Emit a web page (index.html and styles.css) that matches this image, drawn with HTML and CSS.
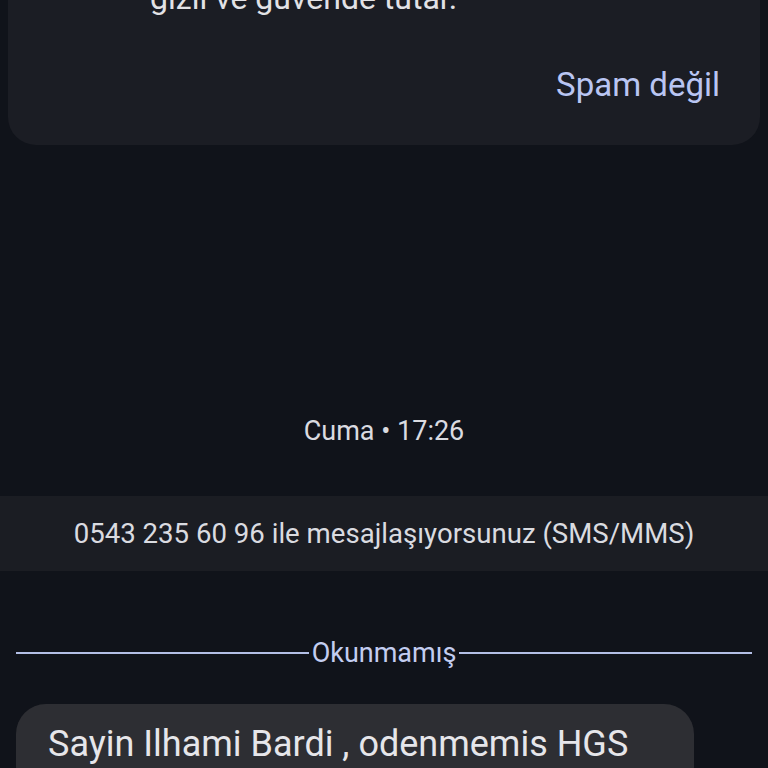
FILE: index.html
```html
<!DOCTYPE html>
<html>
<head>
	<meta charset="utf-8">
	<title>Mesajlar</title>
	<link rel="stylesheet" href="styles.css">
</head>
<body>
	<div class="spam_card">
		<p class="spam_text">gizli ve güvende tutar.</p>
		<div class="spam_actions">
			<span class="spam_btn">Spam değil</span>
		</div>
	</div>

	<div class="date_stamp">Cuma • 17:26</div>

	<div class="sms_banner">0543 235 60 96 ile mesajlaşıyorsunuz (SMS/MMS)</div>

	<div class="unread_divider">
		<span class="line"></span>
		<span class="label">Okunmamış</span>
		<span class="line"></span>
	</div>

	<div class="bubble">Sayin Ilhami Bardi , odenmemis HGS</div>
</body>
</html>
```

FILE: styles.css
```css
html,body{margin:0;padding:0;}
body{
	background:#10131a;
	color:#e2e2e6;
	font-family:Roboto,"Noto Sans",sans-serif;
	width:768px;
	height:768px;
	overflow:hidden;
}
p{margin:0;}

.spam_card{
	margin:-20px 8px 0;
	background:#1b1d24;
	border-radius:0 0 28px 28px;
	padding:0 40px 42px 142px;
}
.spam_text{font-size:32px;line-height:36px;}
.spam_actions{display:flex;justify-content:flex-end;margin-top:51px;}
.spam_btn{color:#b9c5f2;font-size:33px;line-height:36px;}

.date_stamp{
	margin-top:270px;
	text-align:center;
	font-size:27px;
	line-height:32px;
	color:#dadbe0;
}

.sms_banner{
	margin-top:49px;
	height:75px;
	background:#1b1d23;
	display:flex;
	align-items:center;
	justify-content:center;
	font-size:27.6px;
	color:#dadbe0;
}

.unread_divider{
	display:flex;
	align-items:center;
	gap:3px;
	margin:68px 16px 0;
	height:28px;
}
.unread_divider .line{flex:1;height:2px;background:#b3bfe6;}
.unread_divider .label{color:#c3cdf0;font-size:27px;}

.bubble{
	margin:37px 0 0 16px;
	width:614px;
	background:#2d2e33;
	border-radius:30px;
	padding:18px 32px 30px;
	font-size:36px;
	line-height:44px;
	color:#e6e6ea;
}
```
